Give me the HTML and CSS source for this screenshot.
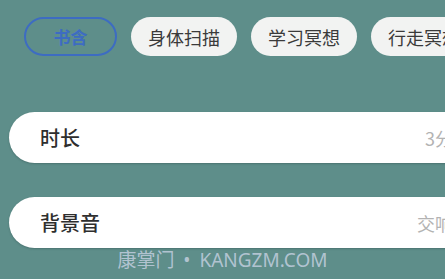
FILE: index.html
```html
<!DOCTYPE html>
<html lang="zh">

<head>
    <meta charset="UTF-8">
    <meta name="viewport" content="width=device-width, initial-scale=1.0">
    <title>冥想设置</title>
    <link rel="stylesheet" href="styles.css">
</head>

<body>
    <div id="tabs">
        <div class="tab active">书含</div>
        <div class="tab">身体扫描</div>
        <div class="tab">学习冥想</div>
        <div class="tab">行走冥想</div>
    </div>

    <div id="settings">
        <div class="row">
            <span class="label">时长</span>
            <div class="flexgrow"></div>
            <span class="value">3分钟</span>
        </div>
        <div class="row">
            <span class="label">背景音</span>
            <div class="flexgrow"></div>
            <span class="value">交响乐</span>
        </div>
    </div>

    <p id="mark">康掌门 • KANGZM.COM</p>
</body>

</html>
```

FILE: styles.css
```css
html,
body {
    font-family: "Noto Sans CJK SC", "Noto Sans", sans-serif;
}

body {
    margin: 0;
    width: 445px;
    height: 279px;
    overflow: hidden;
    background: #5e8e8a;
}

#tabs {
    display: flex;
    gap: 14px;
    padding: 17px 0 0 24px;
    white-space: nowrap;
}

.tab {
    flex-shrink: 0;
    height: 39px;
    box-sizing: border-box;
    padding: 0 17px;
    border-radius: 20px;
    background: #f2f3f2;
    color: #3a3a3a;
    font-size: 18px;
    display: flex;
    align-items: center;
}

.tab.active {
    width: 93px;
    justify-content: center;
    background: transparent;
    border: 2px solid #3d6cc2;
    color: #3d6cc2;
    font-size: 17px;
    font-weight: bold;
}

#settings {
    display: flex;
    flex-direction: column;
    gap: 34px;
    padding: 56px 0 0 9px;
}

.row {
    width: 480px;
    height: 51px;
    box-sizing: border-box;
    padding: 0 18px 0 31px;
    border-radius: 26px;
    background: #fff;
    box-shadow: 0 1px 2px rgba(40, 70, 70, .35);
    display: flex;
    align-items: center;
}

.label {
    font-size: 20px;
    font-weight: 500;
    color: #2e2e2e;
}

.value {
    font-size: 18px;
    color: #b3b3b3;
}

.flexgrow {
    flex-grow: 1;
}

#mark {
    margin: -3px 0 0;
    text-align: center;
    font-family: "Noto Sans", "Noto Sans CJK SC", sans-serif;
    font-size: 19px;
    word-spacing: 4px;
    color: rgba(215, 220, 240, .7);
}
```
